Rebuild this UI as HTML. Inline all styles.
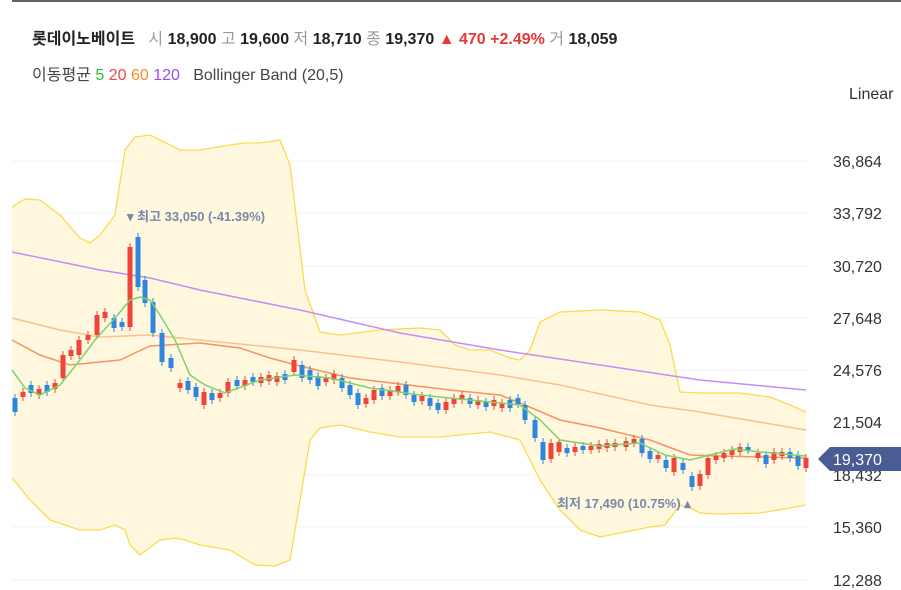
<!DOCTYPE html>
<html><head><meta charset="utf-8"><style>
body{margin:0;width:901px;height:590px;overflow:hidden;background:#fff;font-family:"Liberation Sans","Noto Sans CJK KR",sans-serif;position:relative}
.top{position:absolute;left:12px;top:0;width:889px;height:2px;background:#5f636b}
.t1{position:absolute;left:32px;top:25px;font-size:16px;color:#222;white-space:nowrap}
.t1 b{font-weight:bold}
.g{color:#999;font-weight:normal}
.t2{position:absolute;left:32px;top:61px;font-size:16px;color:#444;white-space:nowrap}
svg{position:absolute;left:0;top:0}
</style></head><body>
<div class="top"></div>
<div class="t1"><b>롯데이노베이트</b>&nbsp;&nbsp; <span class="g">시</span> <b>18,900</b> <span class="g">고</span> <b>19,600</b> <span class="g">저</span> <b>18,710</b> <span class="g">종</span> <b>19,370</b> <span style="color:#e53935;font-weight:bold">▲ 470 +2.49%</span> <span class="g">거</span> <b>18,059</b></div>
<div class="t2">이동평균 <span style="color:#2ec02e">5</span> <span style="color:#f5424b">20</span> <span style="color:#fb8c2c">60</span> <span style="color:#9b4cf5">120</span>&nbsp;&nbsp; Bollinger Band (20,5)</div>
<svg id="s" width="901" height="590" xmlns="http://www.w3.org/2000/svg" font-family="Liberation Sans, Noto Sans CJK KR, sans-serif">
<g stroke="#f2f3f5" stroke-width="1">
<line x1="12" x2="808" y1="161" y2="161"/><line x1="12" x2="808" y1="213" y2="213"/><line x1="12" x2="808" y1="266" y2="266"/><line x1="12" x2="808" y1="318" y2="318"/><line x1="12" x2="808" y1="370" y2="370"/><line x1="12" x2="808" y1="422" y2="422"/><line x1="12" x2="808" y1="475" y2="475"/><line x1="12" x2="808" y1="527" y2="527"/><line x1="12" x2="808" y1="580" y2="580"/>
</g>
<path fill="#fff7dc" fill-opacity="0.9" stroke="none" d="M12,207 L25,199 40,200 60,215 80,238 90,243 100,235 115,215 125,150 135,137 150,135 170,145 180,150 200,150 230,145 245,143 260,143 280,140 290,165 305,290 320,332 340,335 380,330 420,328 440,330 455,345 470,350 490,350 510,358 520,360 530,350 540,322 560,312 600,310 640,312 660,320 670,345 680,392 700,393 740,393 770,397 790,405 806,412 L806,505 790,508 760,513 720,514 700,513 690,508 680,505 665,525 650,527 620,533 600,537 580,530 560,510 540,480 520,440 490,432 440,437 400,437 370,432 340,425 320,428 310,440 300,500 290,560 275,566 255,565 230,550 200,545 185,540 175,538 160,540 140,555 130,545 125,530 115,525 100,530 80,530 50,520 30,500 12,478Z"/>
<g fill="none" stroke="#fdd94f" stroke-width="1.3">
<path d="M12,207 L25,199 40,200 60,215 80,238 90,243 100,235 115,215 125,150 135,137 150,135 170,145 180,150 200,150 230,145 245,143 260,143 280,140 290,165 305,290 320,332 340,335 380,330 420,328 440,330 455,345 470,350 490,350 510,358 520,360 530,350 540,322 560,312 600,310 640,312 660,320 670,345 680,392 700,393 740,393 770,397 790,405 806,412"/>
<path d="M806,505 790,508 760,513 720,514 700,513 690,508 680,505 665,525 650,527 620,533 600,537 580,530 560,510 540,480 520,440 490,432 440,437 400,437 370,432 340,425 320,428 310,440 300,500 290,560 275,566 255,565 230,550 200,545 185,540 175,538 160,540 140,555 130,545 125,530 115,525 100,530 80,530 50,520 30,500 12,478"/>
</g>
<path fill="none" stroke="#c58cf7" stroke-width="1.5" d="M12,252 L100,270 150,278 200,290 300,310 400,333 500,350 600,365 700,380 806,390"/>
<path fill="none" stroke="#fcc08f" stroke-width="1.5" d="M12,318 L60,330 100,337 150,335 200,340 300,350 400,362 500,375 560,385 650,405 700,412 806,430"/>
<path fill="none" stroke="#f7935f" stroke-width="1.5" d="M12,340 L40,355 70,365 90,363 120,360 150,346 200,343 240,348 270,358 300,366 350,378 400,384 450,390 500,395 525,405 560,420 600,428 650,440 690,455 720,456 806,458"/>
<g id="c"></g>
<path fill="none" stroke="#7bd36b" stroke-width="1.5" d="M12,370 L25,388 40,395 60,385 80,360 95,340 115,318 130,300 140,297 150,300 160,315 175,340 190,375 205,385 225,393 260,380 295,375 330,378 370,388 420,395 470,400 520,405 540,420 560,440 600,446 640,443 665,455 690,460 710,455 735,449 760,452 806,456"/>
<text x="127" y="221" font-size="13" font-weight="bold" fill="#7a88a8">▾ 최고 33,050 (-41.39%)</text>
<text x="557" y="508" font-size="13" font-weight="bold" fill="#7a88a8">최저 17,490 (10.75%) ▴</text>
<g font-size="16" fill="#333">
<text x="849" y="99">Linear</text>
<text x="833" y="167">36,864</text><text x="833" y="219">33,792</text><text x="833" y="272">30,720</text><text x="833" y="324">27,648</text><text x="833" y="376">24,576</text><text x="833" y="428">21,504</text><text x="833" y="481">18,432</text><text x="833" y="533">15,360</text><text x="833" y="586">12,288</text>
</g>
<path d="M818,459 L830,447 L901,447 L901,471 L830,471Z" fill="#4a5c94"/>
<text x="833" y="465" font-size="16" fill="#fff">19,370</text>
</svg>
<script>
var C=[[15,398,412],[23,397,392],[31,385,393],[39,395,389],[47,385,392],[55,389,383],[63,378,355],[71,356,350],[79,355,340],[88,340,335],[97,335,315],[105,318,312],[114,318,328],[122,322,327],[130,327,247],[138,237,287],[145,280,303],[153,302,333],[162,333,362],[171,358,368],[180,388,383],[188,381,390],[196,387,397],[204,405,392],[212,393,400],[220,398,393],[228,393,382],[237,380,386],[245,386,380],[253,377,382],[261,383,377],[269,381,375],[277,382,376],[285,374,380],[294,372,360],[302,365,378],[310,370,380],[318,376,386],[326,382,378],[334,380,374],[342,378,388],[350,385,395],[358,393,405],[366,404,398],[374,400,390],[382,388,396],[390,396,390],[398,392,386],[406,385,395],[414,395,402],[422,401,396],[430,398,406],[438,403,410],[446,410,402],[454,404,398],[462,400,395],[470,398,404],[478,405,400],[486,402,407],[494,406,400],[502,408,403],[510,400,408],[518,398,404],[525,405,420],[535,420,438],[543,442,460],[551,459,443],[559,452,442],[567,448,453],[575,452,447],[583,446,450],[591,450,446],[599,449,444],[607,448,443],[615,447,443],[626,447,441],[634,443,439],[642,439,453],[650,451,459],[658,459,455],[666,460,468],[674,472,458],[683,463,470],[692,476,487],[700,486,474],[708,475,458],[716,460,456],[724,458,453],[732,455,450],[740,452,447],[748,447,450],[758,458,453],[766,455,464],[774,460,452],[782,456,452],[790,452,458],[798,455,466],[806,468,458]];
var h='';C.forEach(function(c){var x=c[0],o=c[1],cl=c[2],up=cl<o,col=up?'#f0433a':'#2f86dc',t=Math.min(o,cl),b=Math.max(o,cl);if(b-t<3){b=t+3}h+='<line x1="'+x+'" x2="'+x+'" y1="'+(t-4)+'" y2="'+(b+4)+'" stroke="'+col+'" stroke-width="1"/><rect x="'+(x-2.5)+'" y="'+t+'" width="5" height="'+(b-t)+'" fill="'+col+'"/>';});
document.getElementById('c').innerHTML=h;
</script>
</body></html>
